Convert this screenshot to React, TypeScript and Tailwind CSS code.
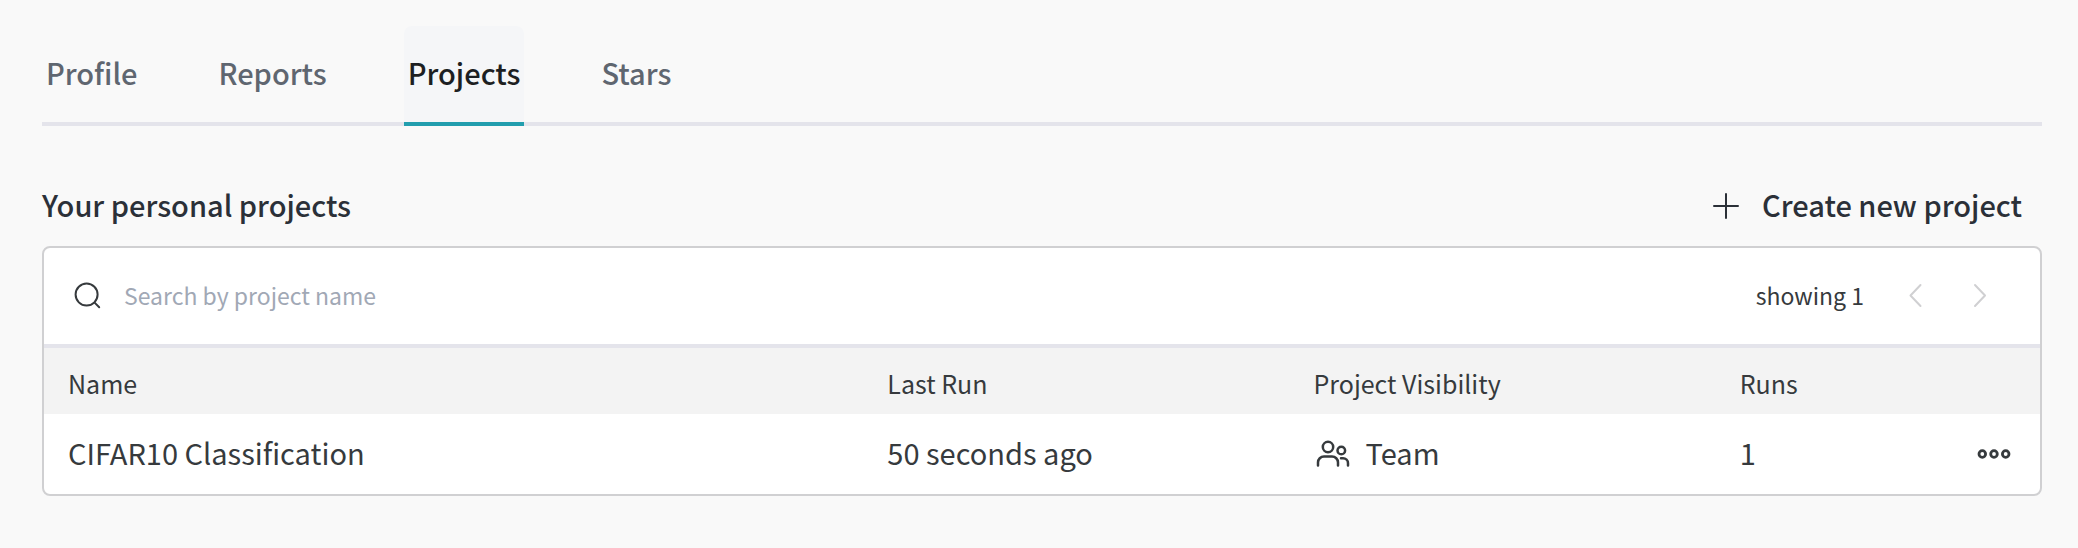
import { useState } from 'react';

const tabs = ['Profile', 'Reports', 'Projects', 'Stars'];

const projects = [
  { name: 'CIFAR10 Classification', lastRun: '50 seconds ago', visibility: 'Team', runs: 1 },
];

function PlusIcon() {
  return (
    <svg aria-hidden="true" className="size-8" viewBox="0 0 32 32" fill="none" stroke="currentColor" strokeWidth="2" strokeLinecap="round">
      <path d="M16 4v24M4 16h24" />
    </svg>
  );
}

function SearchIcon() {
  return (
    <svg aria-hidden="true" className="size-8 shrink-0" viewBox="0 0 32 32" fill="none" stroke="currentColor" strokeWidth="2" strokeLinecap="round">
      <circle cx="14.6" cy="14.6" r="11" />
      <path d="M22.6 22.6l4.600 4.600" />
    </svg>
  );
}

function ChevronIcon({ d }: { d: string }) {
  return (
    <svg aria-hidden="true" className="size-8" viewBox="0 0 32 32" fill="none" stroke="currentColor" strokeWidth="2" strokeLinecap="round" strokeLinejoin="round">
      <path d={d} />
    </svg>
  );
}

function TeamIcon() {
  return (
    <svg aria-hidden="true" className="h-8 w-10" viewBox="0 0 40 32" fill="none" stroke="currentColor" strokeWidth="2.5" strokeLinecap="round">
      <circle cx="15" cy="9" r="5.2" />
      <path d="M5 27.5v-3a6 6 0 0 1 6-6h8a6 6 0 0 1 6 6v3" />
      <circle cx="28.300" cy="12.500" r="3.800" />
      <path d="M28 20.200h2a5 5 0 0 1 5 5v2.300" />
    </svg>
  );
}

function MoreIcon() {
  return (
    <svg aria-hidden="true" className="h-8 w-9" viewBox="0 0 36 32" fill="none" stroke="currentColor" strokeWidth="2.8">
      <circle cx="6.3" cy="16" r="3.3" />
      <circle cx="18" cy="16" r="3.3" />
      <circle cx="29.7" cy="16" r="3.3" />
    </svg>
  );
}

export default function App() {
  const [active, setActive] = useState('Projects');
  const [query, setQuery] = useState('');
  const shown = projects.filter((p) => p.name.toLowerCase().includes(query.toLowerCase()));

  return (
    <main className="min-h-screen bg-[#f9f9f9] px-[42px] pt-[26px] pr-9 pb-12 font-['Noto_Sans_CJK_SC','Noto_Sans',sans-serif] text-[29px] leading-10 text-[#363a3d]">
      <nav className="flex gap-[73px] bg-[linear-gradient(#e4e4eb,#e4e4eb)] bg-[length:100%_4px] bg-bottom bg-no-repeat font-medium">
        {tabs.map((tab) => (
          <button
            key={tab}
            type="button"
            onClick={() => setActive(tab)}
            className={
              tab === active
                ? 'rounded-t-lg border-b-4 border-[#229eae] bg-[#f5f6f8] px-1 pt-[26px] pb-[30px] text-[#1d1f22]'
                : 'border-b-4 border-transparent px-1 pt-[26px] pb-[30px] text-[#5f6670]'
            }
          >
            {tab}
          </button>
        ))}
      </nav>

      <header className="flex items-center justify-between pt-[58px] pr-5 pb-[18px] font-medium text-[#2b3038]">
        <h1 className="pb-1">Your personal projects</h1>
        <button type="button" className="flex items-center gap-5">
          <PlusIcon />
          <span className="pb-1">Create new project</span>
        </button>
      </header>

      <section className="overflow-hidden rounded-lg border-2 border-[#d0d0d2] bg-white">
        <div className="flex h-[100px] items-center border-b-4 border-[#e4e4eb] pr-[45px] pl-7 text-[23px]">
          <label className="flex grow items-center gap-5">
            <SearchIcon />
            <input
              type="text"
              aria-label="Search by project name"
              placeholder="Search by project name"
              value={query}
              onChange={(e) => setQuery(e.target.value)}
              className="grow bg-transparent pb-0.5 outline-none placeholder:text-[#a1a8b5]"
            />
          </label>
          <span className="pb-0.5">showing {shown.length}</span>
          <div className="flex gap-8 pl-[35px] text-[#d0d0d2]">
            <button type="button" disabled aria-label="Previous page">
              <ChevronIcon d="M21.5 5L11.5 15.5L21.5 26" />
            </button>
            <button type="button" disabled aria-label="Next page">
              <ChevronIcon d="M12 5L22 15.500L12 26" />
            </button>
          </div>
        </div>

        <table className="w-full table-fixed text-left">
          <thead className="bg-[#f3f3f3] text-[25px]">
            <tr className="h-[66px]">
              <th scope="col" className="w-[41.05%] pt-1 pl-6 font-normal">Name</th>
              <th scope="col" className="w-[21.35%] pt-1 pl-6 font-normal">Last Run</th>
              <th scope="col" className="w-[21.35%] pt-1 pl-6 font-normal">Project Visibility</th>
              <th scope="col" className="pt-1 pl-6 font-normal">Runs</th>
              <td className="w-24" />
            </tr>
          </thead>
          <tbody>
            {shown.map((p) => (
              <tr key={p.name} className="h-20">
                <td className="pb-1 pl-6">{p.name}</td>
                <td className="pb-1 pl-6">{p.lastRun}</td>
                <td className="pl-6">
                  <span className="flex items-center gap-3">
                    <TeamIcon />
                    <span className="pb-1">{p.visibility}</span>
                  </span>
                </td>
                <td className="pb-1 pl-6">{p.runs}</td>
                <td className="pr-7">
                  <button type="button" aria-label={`Actions for ${p.name}`} className="ml-auto block">
                    <MoreIcon />
                  </button>
                </td>
              </tr>
            ))}
          </tbody>
        </table>
      </section>
    </main>
  );
}
